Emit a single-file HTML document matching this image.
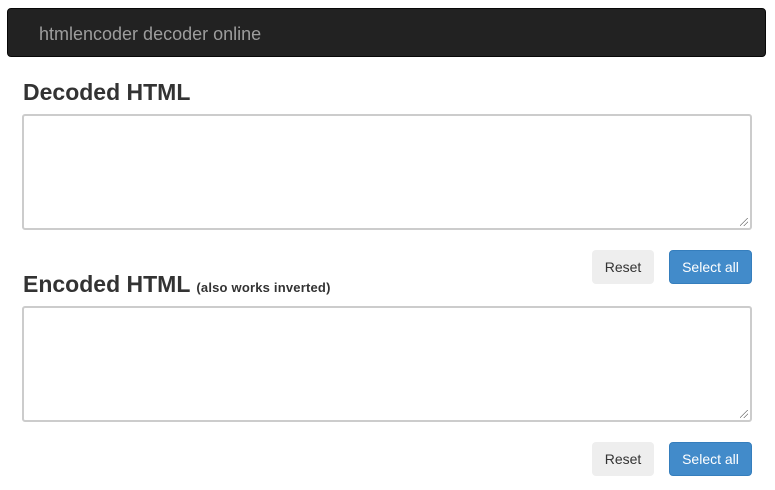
<!DOCTYPE html>
<html><head><meta charset="utf-8"><style>
body{margin:0;width:775px;height:490px;background:#fff;font-family:"Liberation Sans",Arial,sans-serif;color:#333;position:relative;overflow:hidden}
.nav{position:absolute;left:7px;top:8px;width:759px;height:49px;background:#222;border:1px solid #080808;border-radius:4px;box-sizing:border-box}
.nav span{position:absolute;left:31px;top:15px;font-size:18px;color:#9d9d9d}
h2{position:absolute;left:23px;margin:0;font-size:23px;font-weight:bold;color:#333}
h2 small{font-size:13px;font-weight:bold;color:#333;letter-spacing:0.2px}
.ta{position:absolute;left:22px;width:730px;height:116px;border:2px solid #ccc;border-radius:3px;box-sizing:border-box;background:#fff}
.ta:after{content:"";position:absolute;right:2px;bottom:2px;width:8px;height:8px;background:linear-gradient(135deg,transparent 45%,#777 45%,#777 52%,transparent 52%,transparent 70%,#777 70%,#777 77%,transparent 77%)}
.btn{position:absolute;height:34px;border-radius:4px;font-size:14px;line-height:34px;text-align:center;box-sizing:border-box}
.r{left:592px;width:62px;background:#eee;color:#333}
.s{left:669px;width:83px;background:#428bca;color:#fff;border:1px solid #357ebd;line-height:32px}
</style></head><body>
<div class="nav"><span>htmlencoder decoder online</span></div>
<h2 style="top:79px">Decoded HTML</h2>
<div class="ta" style="top:114px"></div>
<div class="btn r" style="top:250px">Reset</div>
<div class="btn s" style="top:250px">Select all</div>
<h2 style="top:271px">Encoded HTML <small>(also works inverted)</small></h2>
<div class="ta" style="top:306px"></div>
<div class="btn r" style="top:442px">Reset</div>
<div class="btn s" style="top:442px">Select all</div>
</body></html>
